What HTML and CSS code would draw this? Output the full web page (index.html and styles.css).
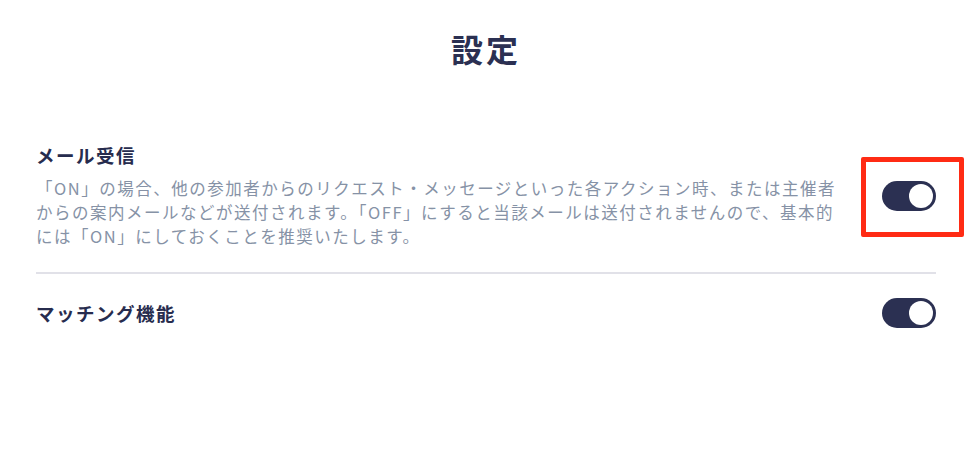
FILE: index.html
```html
<!DOCTYPE html>
<html lang="ja">
<head>
<meta charset="utf-8">
<title>設定</title>
<link rel="stylesheet" href="styles.css">
</head>
<body>
<main class="settings">
  <h1 class="settings-title">設定</h1>
  <section class="setting-row">
    <div class="setting-text">
      <h2 class="setting-name">メール受信</h2>
      <p class="setting-desc">「ON」の場合、他の参加者からのリクエスト・メッセージといった各アクション時、または主催者からの案内メールなどが送付されます。「OFF」にすると当該メールは送付されませんので、基本的には「ON」にしておくことを推奨いたします。</p>
    </div>
    <div class="toggle-wrap">
      <span class="toggle is-on"><span class="toggle-knob"></span></span>
      <span class="highlight"></span>
    </div>
  </section>
  <hr class="divider">
  <section class="setting-row">
    <div class="setting-text">
      <h2 class="setting-name">マッチング機能</h2>
    </div>
    <div class="toggle-wrap">
      <span class="toggle is-on"><span class="toggle-knob"></span></span>
    </div>
  </section>
</main>
</body>
</html>
```

FILE: styles.css
```css
html, body {
  margin: 0;
  padding: 0;
  background: #ffffff;
}

body {
  font-family: "Noto Sans CJK JP", "Noto Sans", sans-serif;
  color: #2b3052;
}

.settings {
  width: 900px;
  padding: 26px 0 0 36px;
}

.settings-title {
  margin: 0 0 50px 0;
  text-align: center;
  font-size: 32px;
  line-height: 44px;
  font-weight: 700;
  letter-spacing: 3px;
  color: #2b3052;
}

.setting-row {
  display: flex;
  align-items: center;
  justify-content: space-between;
  padding: 24px 0;
}

.setting-text {
  width: 816px;
}

.setting-name {
  margin: 0;
  font-size: 18.5px;
  line-height: 22px;
  font-weight: 700;
  letter-spacing: 1.5px;
  color: #272c4e;
}

.setting-desc {
  margin: 10px 0 0 0;
  font-size: 16.5px;
  line-height: 24px;
  letter-spacing: 1.5px;
  color: #8692a6;
}

.toggle-wrap {
  position: relative;
  display: flex;
}

.toggle {
  display: flex;
  align-items: center;
  justify-content: flex-end;
  width: 54px;
  height: 30px;
  padding: 0 3px;
  box-sizing: border-box;
  border-radius: 15px;
  background: #2b3052;
}

.toggle-knob {
  width: 24px;
  height: 24px;
  border-radius: 50%;
  background: #ffffff;
}

.highlight {
  position: absolute;
  left: -21px;
  top: -24px;
  width: 103px;
  height: 80px;
  box-sizing: border-box;
  border: 5px solid #ff2b14;
  border-radius: 2px;
}

.divider {
  margin: 0;
  height: 2px;
  border: 0;
  background: #e1e1e8;
}
```
